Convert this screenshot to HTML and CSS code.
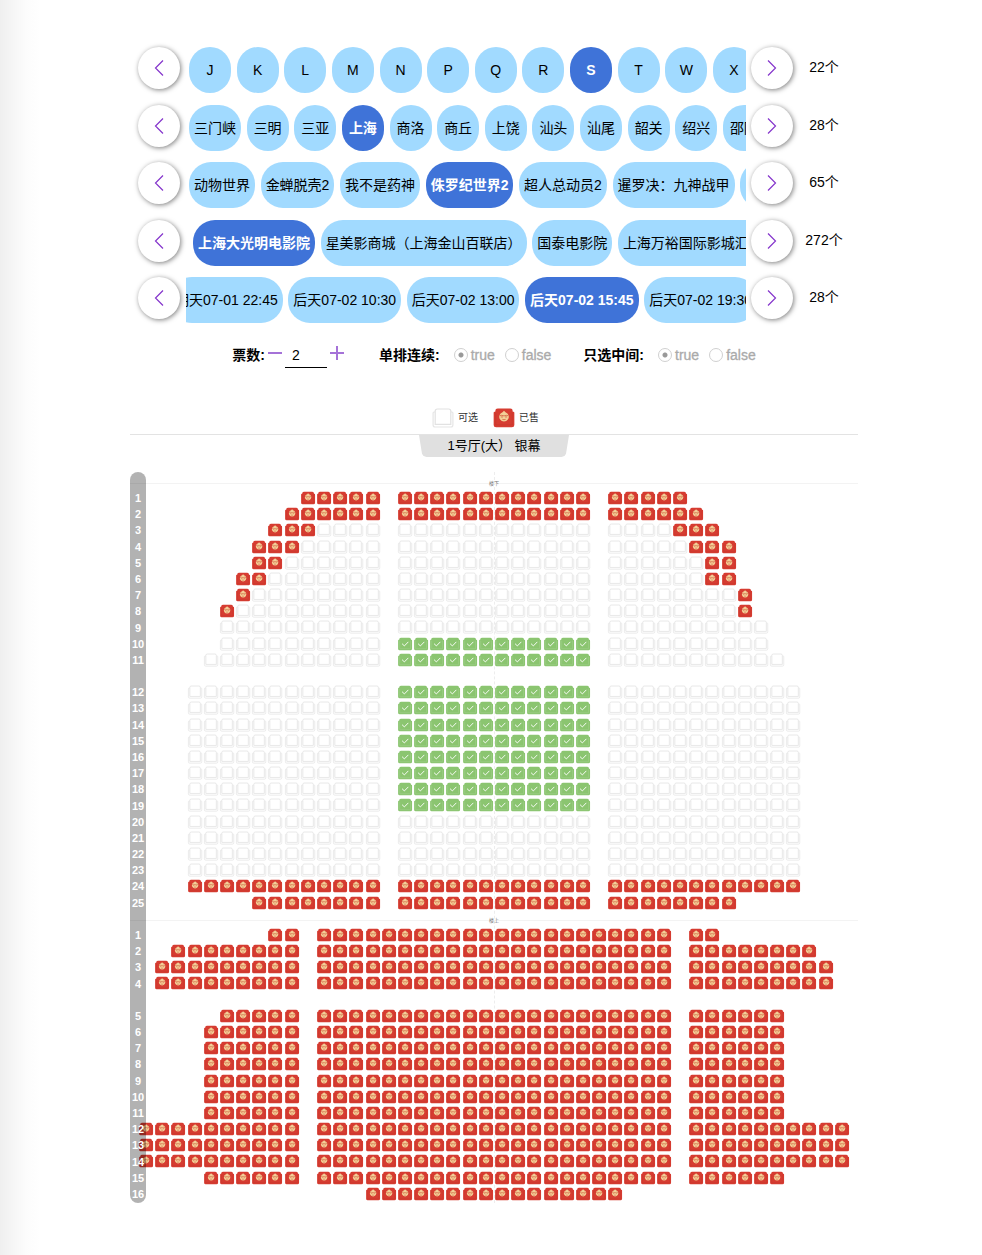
FILE: index.html
```html
<!DOCTYPE html>
<html lang="zh-CN">
<head>
<meta charset="utf-8">
<meta name="viewport" content="width=device-width, initial-scale=1">
<title>选座</title>
<link rel="stylesheet" href="styles.css">
</head>
<body>
<svg class="sprite" aria-hidden="true">
  <symbol id="prev" viewBox="0 0 16 16"><path d="M12 .5 4.500 8l7.500 7.500" fill="none" stroke="currentColor" stroke-width="1.200"/></symbol>
  <symbol id="next" viewBox="0 0 16 16"><path d="M4 .5l7.500 7.500L4 15.500" fill="none" stroke="currentColor" stroke-width="1.200"/></symbol>
  <symbol id="free" viewBox="0 0 16 16">
    <path d="M2.800 4H2q-.6 0-.6.700v8q0 1.300 1.300 1.300h10.600q1.300 0 1.300-1.300V4.700q0-.7-.6-.7h-.8" fill="#fff" stroke="#e6e6e6" stroke-width=".8"/>
    <path d="M2.800 12.300V3.400Q2.800 2 4.200 2h7.600q1.400 0 1.400 1.400v8.900z" fill="#fff" stroke="#e2e2e2" stroke-width=".8"/>
  </symbol>
  <symbol id="sold" viewBox="0 0 16 16">
    <path d="M2.200 3.800V3.300Q2.200 1.700 3.800 1.700h8.400q1.600 0 1.600 1.600v.5h.4q.7 0 .7.700v8.100q0 1.600-1.600 1.600H2.700q-1.600 0-1.600-1.600V4.500q0-.7.7-.7z" fill="#d63c31"/>
    <path d="M2.500 4.600v8h11v-8" fill="none" stroke="#c5362c" stroke-width=".4"/>
    <path d="M8 3.200l1 .9a3.200 3.200 0 1 1-2 0z" fill="#f3cf97"/>
    <path d="M5 6.500q1.500-.6 3 .1 1.500-.7 3-.1M5.900 7.300h1.400m1.400 0h1.400M6.900 8.900q1.100.5 2.200 0" fill="none" stroke="#cf5a3c" stroke-width=".5"/>
  </symbol>
  <symbol id="picked" viewBox="0 0 16 16">
    <path d="M2.200 3.800V3.300Q2.200 1.700 3.800 1.700h8.400q1.600 0 1.600 1.600v.5h.4q.7 0 .7.700v8.100q0 1.600-1.600 1.600H2.700q-1.600 0-1.600-1.600V4.500q0-.7.7-.7z" fill="#8bc570"/>
    <path d="M2.700 4.600v8h10.600v-8" fill="none" stroke="#a5d290" stroke-width=".5"/>
    <path d="M5 7.600l2.300 2.200 3.900-4" fill="none" stroke="#fff" stroke-width=".9"/>
  </symbol>
</svg>

<main class="page">
  <section class="pickers" id="pickers"></section>

  <form class="options">
    <div class="field">
      <label for="count">票数:</label>
      <button type="button" class="step" aria-label="减少"><svg viewBox="0 0 14 14"><path d="M0 7h14"/></svg></button>
      <input class="count" id="count" type="text" value="2">
      <button type="button" class="step" aria-label="增加"><svg viewBox="0 0 14 14"><path d="M0 7h14M7 0v14"/></svg></button>
    </div>
    <fieldset class="choice">
      <legend>单排连续:</legend>
      <label><input type="radio" name="row" checked disabled>true</label>
      <label><input type="radio" name="row" disabled>false</label>
    </fieldset>
    <fieldset class="choice">
      <legend>只选中间:</legend>
      <label><input type="radio" name="middle" checked disabled>true</label>
      <label><input type="radio" name="middle" disabled>false</label>
    </fieldset>
  </form>

  <div class="key">
    <span><svg><use href="#free"/></svg>可选</span>
    <span><svg><use href="#sold"/></svg>已售</span>
  </div>
  <div class="screen-line"><div class="screen">1号厅(大） 银幕</div></div>

  <section class="hall">
    <div class="seats" id="seats"></div>
    <div class="axis"></div>
    <div class="floor floor-down"><span>楼下</span></div>
    <div class="floor floor-up"><span>楼上</span></div>
    <ol class="rows" id="rows"></ol>
  </section>
</main>
<script src="app.js"></script>
</body>
</html>
```
FILE: app.js
```javascript
const pickers = [
  { items: ['J','K','L','M','N','P','Q','R','S','T','W','X'], active: 'S', total: 22 },
  { items: ['三门峡','三明','三亚','上海','商洛','商丘','上饶','汕头','汕尾','韶关','绍兴','邵阳'], active: '上海', total: 28 },
  { items: ['动物世界','金蝉脱壳2','我不是药神','侏罗纪世界2','超人总动员2','暹罗决：九神战甲',''], active: '侏罗纪世界2', total: 65 },
  { items: ['上海大光明电影院','星美影商城（上海金山百联店）','国泰电影院','上海万裕国际影城汇阳店'], active: '上海大光明电影院', total: 272, shift: 'first' },
  { items: ['明天07-01 22:45','后天07-02 10:30','后天07-02 13:00','后天07-02 15:45','后天07-02 19:30'], active: '后天07-02 15:45', total: 28, shift: 'scrolled' }
];

const arrow = (id, label) =>
  `<button type="button" class="arrow" aria-label="${label}"><svg><use href="#${id}"/></svg></button>`;

document.getElementById('pickers').innerHTML = pickers.map(p => `
  <div class="picker">
    ${arrow('prev', '向左')}
    <div class="window"><div class="track ${p.shift || ''}">
      ${p.items.map(t => `<button type="button" class="pill${t === p.active ? ' active' : ''}">${t}</button>`).join(' ')}
    </div></div>
    ${arrow('next', '向右')}
    <span class="total">${p.total}个</span>
  </div>`).join('');

/* Each line: grid row, row label, then [state, first column, last column] runs. */
const F = 'free', S = 'sold', P = 'picked';
const lines = [
  [1, 1, [S,10,14], [S,16,27], [S,29,33]],
  [2, 2, [S,9,14], [S,16,27], [S,29,34]],
  [3, 3, [S,8,10], [F,11,14], [F,16,27], [F,29,32], [S,33,35]],
  [4, 4, [S,7,9], [F,10,14], [F,16,27], [F,29,33], [S,34,36]],
  [5, 5, [S,7,8], [F,9,14], [F,16,27], [F,29,34], [S,35,36]],
  [6, 6, [S,6,7], [F,8,14], [F,16,27], [F,29,34], [S,35,36]],
  [7, 7, [S,6,6], [F,7,14], [F,16,27], [F,29,36], [S,37,37]],
  [8, 8, [S,5,5], [F,6,14], [F,16,27], [F,29,36], [S,37,37]],
  [9, 9, [F,5,14], [F,16,27], [F,29,38]],
  [10, 10, [F,5,14], [P,16,27], [F,29,38]],
  [11, 11, [F,4,14], [P,16,27], [F,29,39]]
];
for (let n = 12; n <= 23; n++) lines.push([n + 1, n, [F,3,14], [n < 20 ? P : F,16,27], [F,29,40]]);
lines.push(
  [25, 24, [S,3,14], [S,16,27], [S,29,40]],
  [26, 25, [S,7,14], [S,16,27], [S,29,36]],
  [28, 1, [S,8,9], [S,11,32], [S,34,35]],
  [29, 2, [S,2,9], [S,11,32], [S,34,41]],
  [30, 3, [S,1,9], [S,11,32], [S,34,42]],
  [31, 4, [S,1,9], [S,11,32], [S,34,42]],
  [33, 5, [S,5,9], [S,11,32], [S,34,39]]
);
for (let n = 6; n <= 15; n++) {
  const wide = n >= 12 && n <= 14;
  lines.push([n + 28, n, [S, wide ? 0 : 4, 9], [S,11,32], [S,34, wide ? 43 : 39]]);
}
lines.push([44, 16, [S,14,29]]);

let seats = '', rows = '';
for (const [line, label, ...runs] of lines) {
  rows += `<li style="grid-row:${line}">${label}</li>`;
  for (const [state, from, to] of runs) {
    for (let c = from; c <= to; c++) {
      seats += `<button type="button" class="seat" style="grid-area:${line}/${c + 1}" aria-label="${label}排"${state === S ? ' disabled' : ''}><svg><use href="#${state}"/></svg></button>`;
    }
  }
}
document.getElementById('seats').innerHTML = seats;
document.getElementById('rows').innerHTML = rows;
```
FILE: styles.css
```css
* { box-sizing: border-box; }

body {
  margin: 0;
  padding: 47px 0 40px 6px;
  min-height: 100vh;
  font: 14px/20px "Liberation Sans", "Noto Sans CJK SC", sans-serif;
  color: #000;
  background: linear-gradient(to right, #efefef, #f6f6f6 14px, #fcfcfc 26px, #fff 40px);
}

button {
  margin: 0;
  padding: 0;
  border: 0;
  font: inherit;
  color: inherit;
  background: none;
}

svg { display: block; }

.sprite {
  position: absolute;
  width: 0;
  height: 0;
}

.page {
  max-width: 728px;
  margin: 0 auto;
}

.pickers {
  display: grid;
  grid-template-columns: minmax(0, 1fr);
  grid-auto-rows: 1fr;
  min-height: 288px;
}

.picker {
  display: flex;
  align-items: flex-start;
  padding-left: 8px;
}

.arrow {
  display: flex;
  flex: none;
  align-items: center;
  justify-content: center;
  width: 42px;
  height: 42px;
  border-radius: 50%;
  color: #8535cc;
  background: #fff;
  box-shadow: 1px 1px 5px rgba(0, 0, 0, .5);
}

.arrow svg {
  width: 16px;
  height: 16px;
}

.window {
  flex: 1;
  min-width: 0;
  margin: 0 5px 0 6px;
  overflow: hidden;
}

.track {
  padding-left: 2px;
  font-size: 13px;
  white-space: nowrap;
}

.track.first { padding-left: 6px; }
.track.scrolled { margin-left: -19px; }

.pill {
  min-width: 42px;
  height: 46px;
  margin: 0 1px;
  padding: 0 5px;
  border-radius: 22px;
  font-size: 14px;
  vertical-align: top;
  background: #a1daff;
}

.pill.active {
  font-weight: bold;
  color: #fff;
  background: #3f73d8;
}

.total {
  flex: none;
  width: 62px;
  margin-right: 3px;
  line-height: 40px;
  text-align: center;
}

.options {
  display: flex;
  justify-content: center;
  gap: 32px;
  margin-top: 7px;
}

.field,
.choice {
  display: flex;
  align-items: center;
  height: 26px;
}

.field label,
.choice legend { font-weight: bold; }

.step {
  align-self: flex-start;
  width: 14px;
  height: 22px;
  margin: 0 3px;
}

.step svg {
  width: 14px;
  height: 14px;
  fill: none;
  stroke: #a572d8;
  stroke-width: 2;
}

.count {
  width: 42px;
  height: 26px;
  padding: 0 7px;
  border: 0;
  border-bottom: 1px solid #000;
  font: inherit;
  background: none;
}

.choice {
  gap: 10px;
  margin: 0;
  padding: 0;
  border: 0;
}

.choice legend {
  float: left;
  padding: 0;
  margin-right: 4px;
}

.choice label {
  display: flex;
  align-items: center;
  gap: 3px;
  color: #aaa;
  -webkit-text-stroke: 0.3px #aaa;
}

.choice input {
  width: 14px;
  height: 14px;
  margin: 0;
  border: 1px solid #d0d0d0;
  border-radius: 50%;
  appearance: none;
  background: #fff;
}

.choice input:checked { background: radial-gradient(circle, #999 2px, #fff 3px); }

.key {
  display: flex;
  justify-content: center;
  gap: 14px;
  margin: 38px 18px 4px 0;
  font-size: 10px;
  line-height: 24px;
  color: #333;
}

.key span {
  display: flex;
  gap: 3px;
}

.key svg {
  width: 24px;
  height: 24px;
}

.screen-line {
  display: flex;
  justify-content: center;
  border-top: 1px solid #e3e3e3;
}

.screen {
  width: 150px;
  border-radius: 0 0 6px 6px;
  font-size: 13px;
  line-height: 22px;
  text-align: center;
  background: #e0e0e0;
  clip-path: polygon(0 0, 100% 0, 98% 85%, 97% 95%, 95% 100%, 5% 100%, 3% 95%, 2% 85%);
}

.hall {
  position: relative;
  margin-top: 15px;
  padding: 18px 8px 1px;
}

.seats {
  display: grid;
  grid-template: repeat(44, minmax(0, 1fr)) / repeat(44, minmax(0, 1fr));
  aspect-ratio: 1;
}

.seat { min-width: 0; }

.seat svg {
  width: 100%;
  height: 100%;
}

.axis {
  position: absolute;
  top: 0;
  bottom: 0;
  left: 50%;
  border-left: 1px dashed rgba(0, 0, 0, .07);
}

.floor {
  position: absolute;
  right: 0;
  left: 0;
  display: flex;
  justify-content: center;
  height: 1px;
  font-size: 5px;
  line-height: 1px;
  color: #777;
  background: #f3f3f3;
}

.floor-down { top: 11px; }
.floor-up { top: 448px; }

.floor span {
  align-self: center;
}

.rows {
  position: absolute;
  inset: 0 auto 0 0;
  display: grid;
  grid-template-rows: repeat(44, minmax(0, 1fr));
  align-items: center;
  width: 16px;
  margin: 0;
  padding: 18px 0 1px;
  border-radius: 8px;
  font-size: 11px;
  font-weight: bold;
  line-height: 16px;
  text-align: center;
  list-style: none;
  color: #fff;
  background: rgba(0, 0, 0, .3);
}
```
